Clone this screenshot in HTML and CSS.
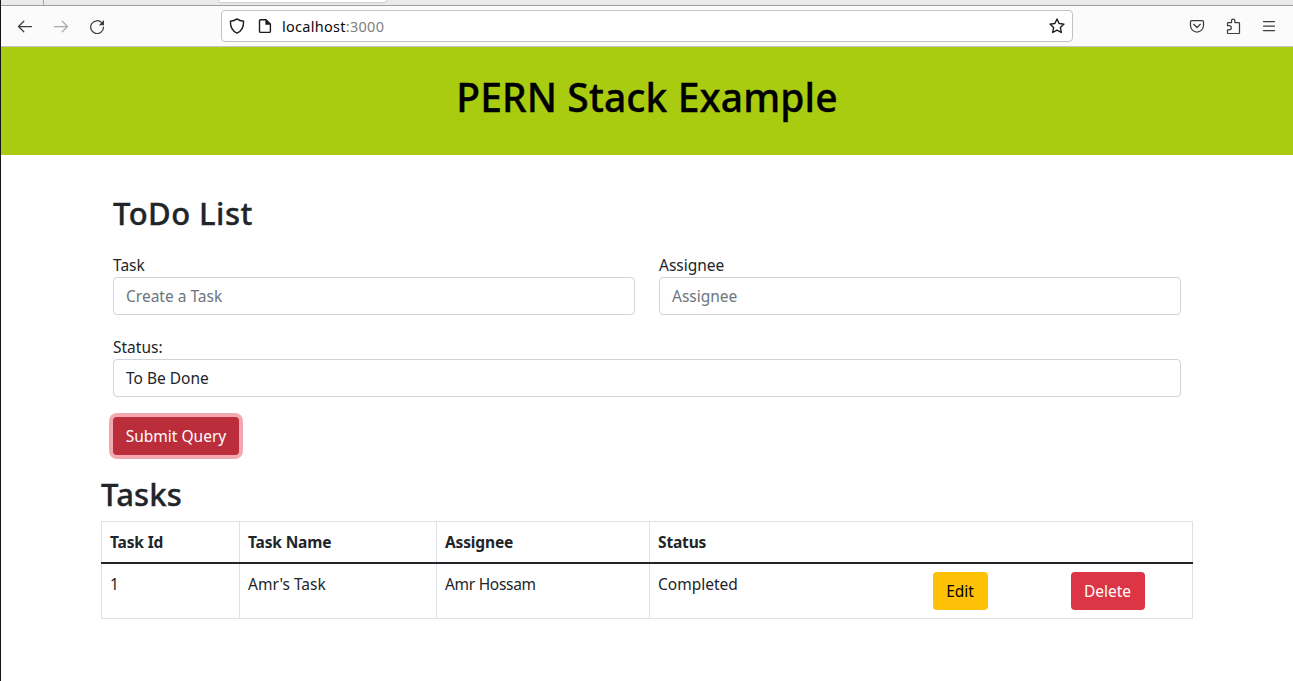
FILE: index.html
```html
<!DOCTYPE html>
<html lang="en">
<head>
<meta charset="utf-8">
<title>PERN Stack Example</title>
<link rel="stylesheet" href="styles.css">
</head>
<body>
<div class="window">
  <div class="tabstrip"><div class="tab-divider"></div><div class="tab-active"></div></div>
  <div class="toolbar">
    <div class="nav-icons">
      <svg class="icon" viewBox="0 0 16 16"><path d="M14.600 8.500H1.500M6.800 3.200 1.500 8.500l5.300 5.300"/></svg>
      <svg class="icon disabled" viewBox="0 0 16 16"><path d="M1.400 8.500h13.100M9.200 3.200l5.300 5.300-5.300 5.300"/></svg>
      <svg class="icon" viewBox="0 0 16 16"><path d="M12.900 4.900A6.400 6.400 0 1 0 14.500 9.100"/><path class="solid" d="M15 2v5.200H9.800z"/></svg>
    </div>
    <div class="urlbar">
      <svg class="icon dark" viewBox="0 0 16 16"><path d="M8 .9C6.400 2.100 3.700 3.100 1.400 3.300 1.300 8.500 3.300 13.200 8 15.200c4.700-2 6.700-6.700 6.600-11.900C12.300 3.100 9.600 2.100 8 .9z"/></svg>
      <svg class="icon dark page" viewBox="0 0 16 16"><path d="M3.700 1.700h5.300l4.400 4.400v7.100a1.200 1.200 0 0 1-1.200 1.200H3.700a1.200 1.200 0 0 1-1.200-1.200V2.900a1.200 1.200 0 0 1 1.200-1.200z"/><path class="solid" d="M8.400 1.500 13.600 6.700H8.400z"/></svg>
      <span class="url"><span class="host">localhost</span><span class="port">:3000</span></span>
      <svg class="icon dark star" viewBox="0 0 16 16"><path d="m8 1 2.100 4.500 4.900.6-3.600 3.400.9 5L8 12.100l-4.300 2.400.9-5L1 6.100l4.900-.6z"/></svg>
    </div>
    <div class="tools">
      <svg class="icon" viewBox="0 0 16 16"><path d="M2.700 2.600h10.600c.8 0 1.200.4 1.200 1.200v3.700a6.500 6.500 0 0 1-13 0V3.800c0-.8.4-1.200 1.200-1.200z"/><path d="M4.700 6.300 8 9.500l3.300-3.200"/></svg>
      <svg class="icon" viewBox="0 0 16 16"><path d="M2.500 7.700V5.300c0-.5.300-.8.800-.8h3.200V2.800a1.700 1.700 0 0 1 3.400 0v1.700h3.800c.5 0 .8.300.8.800v9.400c0 .5-.3.800-.8.800H3.300c-.5 0-.8-.3-.8-.8v-2.900h1.700a2 2 0 0 0 0-4.100z"/></svg>
      <svg class="icon" viewBox="0 0 16 16"><path d="M2.500 3.500h11M2.500 8h11M2.500 12.500h11"/></svg>
    </div>
  </div>
  <header class="banner"><h1>PERN Stack Example</h1></header>
  <main class="container">
    <form class="todo-form">
      <h2 class="form-title">ToDo List</h2>
      <div class="row">
        <div class="field"><label>Task</label><div class="control placeholder">Create a Task</div></div>
        <div class="field"><label>Assignee</label><div class="control placeholder">Assignee</div></div>
      </div>
      <div class="field status-field"><label>Status:</label><div class="control">To Be Done</div></div>
      <button type="button" class="btn submit">Submit Query</button>
    </form>
    <h2 class="tasks-title">Tasks</h2>
    <table class="tasks">
      <colgroup><col class="c1"><col class="c2"><col class="c3"><col class="c4"><col class="c5"><col class="c6"></colgroup>
      <thead><tr><th>Task Id</th><th>Task Name</th><th>Assignee</th><th class="open">Status</th><th class="open"></th><th></th></tr></thead>
      <tbody><tr><td>1</td><td>Amr's Task</td><td class="person">Amr Hossam</td><td class="open">Completed</td><td class="open"><button type="button" class="btn edit">Edit</button></td><td><button type="button" class="btn delete">Delete</button></td></tr></tbody>
    </table>
  </main>
</div>
</body>
</html>
```
FILE: styles.css
```css
* { box-sizing: border-box; }
body { margin: 0; background: #fff; color: #212529; font: 15.5px/24px "Noto Sans", sans-serif; overflow: hidden; }
.window { height: 681px; border-left: 1px solid #151515; }
h1, h2 { margin: 0; font-weight: 500; -webkit-text-stroke: .35px currentColor; }

.tabstrip { display: flex; height: 6px; background: #eaeaea; border-bottom: 1px solid #9f9f9f; }
.tab-divider { width: 43px; border-right: 1px solid #a5a5a5; }
.tab-active { width: 167px; height: 2px; margin-left: 175px; background: #fff; border-radius: 0 0 4px 4px; box-shadow: 0 0 2px rgba(0,0,0,.4); }
.toolbar { display: flex; align-items: center; height: 41px; background: #fbfbfb; border-bottom: 1px solid #c4c4c4; }
.icon { width: 16px; height: 16px; flex: none; fill: none; stroke: #3d3d3d; stroke-width: 1.25; stroke-linecap: round; stroke-linejoin: round; }
.icon .solid { fill: currentColor; stroke: none; color: #3d3d3d; }
.icon.dark { stroke: #1c1c1c; stroke-width: 1.4; }
.icon.dark .solid { color: #1c1c1c; }
.disabled { opacity: .42; }
.nav-icons { display: flex; gap: 20px; width: 220px; padding-left: 16px; }
.urlbar { display: flex; align-items: center; width: 852px; height: 32px; padding: 0 7px; background: #fff; border: 1px solid #c2c2c6; border-radius: 4px; }
.page { margin-left: 12px; }
.url { margin-left: 9px; font-size: 14.5px; line-height: 20px; letter-spacing: .28px; color: #808080; }
.host { color: #0c0c0d; }
.star { margin-left: auto; }
.tools { display: flex; gap: 20px; margin-left: auto; padding-right: 16px; }

.banner { height: 108px; padding-top: 26px; background: #a9cc10; color: #000; text-align: center; }
.banner h1 { font-size: 39px; line-height: 48px; letter-spacing: .1px; }

.container { width: 1092px; margin-left: 100px; padding-top: 39px; }
.todo-form { padding: 0 12px; }
.form-title, .tasks-title { font-size: 31px; line-height: 38px; }
.form-title { letter-spacing: .45px; }
.row { display: grid; grid-template-columns: 1fr 1fr; gap: 24px; margin-top: 21px; }
.field label { display: block; }
.control { height: 38px; padding: 6px 12px; border: 1px solid #ced4da; border-radius: 4px; background: #fff; }
.placeholder { color: #6c757d; }
.status-field { margin-top: 20px; }
.btn { display: block; height: 38px; padding: 0; border: 0; border-radius: 4px; color: #fff; font: inherit; text-align: center; white-space: nowrap; }
.submit { width: 126px; margin-top: 20px; background: #bb2d3b; box-shadow: 0 0 0 4px #f1a8b0; }
.tasks-title { margin-top: 20px; letter-spacing: .2px; }
.tasks { width: 1092px; margin-top: 8px; table-layout: fixed; border-collapse: collapse; }
.c1 { width: 138px; }
.c2 { width: 197px; }
.c3 { width: 213px; }
.c4 { width: 275px; }
.c5 { width: 138px; }
.tasks th, .tasks td { padding: 8px; border: 1px solid #dee2e6; text-align: left; vertical-align: top; }
.tasks th { font-weight: 700; letter-spacing: -.15px; }
.tasks .person { letter-spacing: -.3px; }
.tasks .open { border-right: 0; }
.tasks .open + th, .tasks .open + td { border-left: 0; }
.tasks tbody td { border-top: 2px solid #212529; }
.edit { width: 55px; background: #ffc107; color: #000; }
.delete { width: 74px; background: #dc3545; }
```
